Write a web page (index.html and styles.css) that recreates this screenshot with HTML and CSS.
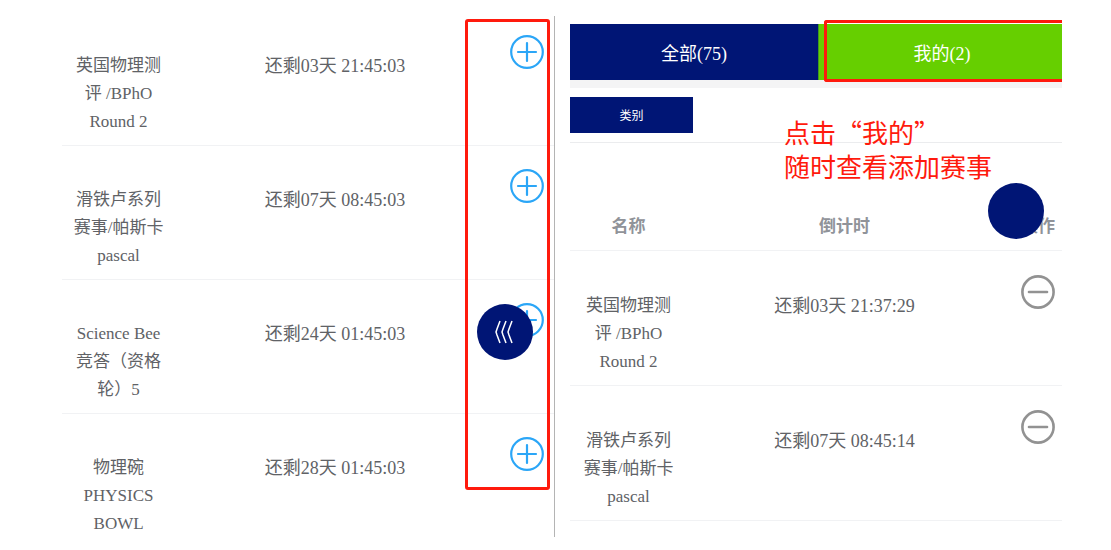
FILE: index.html
```html
<!DOCTYPE html>
<html lang="zh-CN">
    <head>
        <meta charset="UTF-8" />
        <meta name="viewport" content="width=device-width, initial-scale=1.0" />
        <title>赛事倒计时</title>
        <link rel="stylesheet" href="styles.css">
    </head>
    <body>
        <!-- shared icons -->
        <svg class="sprite" aria-hidden="true">
            <symbol id="plus" viewBox="0 0 34 34">
                <circle cx="17" cy="17" r="15.8" />
                <path d="M8 17h18M17 8v18" />
            </symbol>
            <symbol id="minus" viewBox="0 0 34 34">
                <circle cx="17" cy="17" r="15.6" />
                <path d="M8 17h18" />
            </symbol>
        </svg>

        <main class="page">
            <section class="panel panel-all">
                <table class="events">
                    <tbody>
                        <tr>
                            <td class="name">英国物理测评 /BPhO Round 2</td>
                            <td class="time">还剩03天 21:45:03</td>
                            <td class="action"><button class="icon-btn add" aria-label="添加"><svg><use href="#plus" /></svg></button></td>
                        </tr>
                        <tr>
                            <td class="name">滑铁卢系列赛事/帕斯卡 pascal</td>
                            <td class="time">还剩07天 08:45:03</td>
                            <td class="action"><button class="icon-btn add" aria-label="添加"><svg><use href="#plus" /></svg></button></td>
                        </tr>
                        <tr>
                            <td class="name">Science Bee 竞答（资格轮）5</td>
                            <td class="time">还剩24天 01:45:03</td>
                            <td class="action"><button class="icon-btn add" aria-label="添加"><svg><use href="#plus" /></svg></button></td>
                        </tr>
                        <tr>
                            <td class="name">物理碗 PHYSICS BOWL</td>
                            <td class="time">还剩28天 01:45:03</td>
                            <td class="action"><button class="icon-btn add" aria-label="添加"><svg><use href="#plus" /></svg></button></td>
                        </tr>
                    </tbody>
                </table>
                <button class="float-btn float-open" aria-label="展开">
                    <svg class="chevrons" viewBox="0 0 20 24">
                        <path d="M5 1L2 9l-1 3l1 3l3 8M11 1L8 9l-1 3l1 3l3 8M17 1L14 9l-1 3l1 3l3 8" />
                    </svg>
                </button>
                <div class="mark mark-column"></div>
            </section>

            <section class="panel panel-mine">
                <div class="tabs">
                    <button class="tab">全部(75)</button>
                    <button class="tab tab-active">我的(2)</button>
                </div>
                <div class="filters">
                    <button class="filter">类别</button>
                </div>
                <table class="events">
                    <thead>
                        <tr>
                            <th class="name">名称</th>
                            <th class="time">倒计时</th>
                            <th class="action">操作</th>
                        </tr>
                    </thead>
                    <tbody>
                        <tr>
                            <td class="name">英国物理测评 /BPhO Round 2</td>
                            <td class="time">还剩03天 21:37:29</td>
                            <td class="action"><button class="icon-btn remove" aria-label="移除"><svg><use href="#minus" /></svg></button></td>
                        </tr>
                        <tr>
                            <td class="name">滑铁卢系列赛事/帕斯卡 pascal</td>
                            <td class="time">还剩07天 08:45:14</td>
                            <td class="action"><button class="icon-btn remove" aria-label="移除"><svg><use href="#minus" /></svg></button></td>
                        </tr>
                    </tbody>
                </table>
                <button class="float-btn float-plain" aria-label="菜单"></button>
                <div class="mark mark-tab"></div>
                <p class="note">点击“我的”<br>随时查看添加赛事</p>
            </section>
        </main>
    </body>
</html>
```

FILE: styles.css
```css
* {
    box-sizing: border-box;
}

body {
    margin: 0;
    background: #fff;
    color: #606266;
    font-family: "Liberation Serif", "Noto Sans CJK SC", serif;
    font-size: 17px;
    line-height: 28px;
}

button {
    border: none;
    padding: 0;
    font-family: inherit;
    cursor: pointer;
}

.sprite {
    display: none;
}

.page {
    display: flex;
    gap: 15px;
    height: 100vh;
    padding: 16px 49px 13px 62px;
}

.panel {
    position: relative;
    flex: 1;
    overflow: hidden;
}

.panel-all {
    border-right: 1px solid #b4b4b4;
}

.panel-mine {
    padding-top: 8px;
}

/* tables */
.events {
    width: 100%;
    table-layout: fixed;
    border-spacing: 0;
}

/* list is scrolled a little under the top edge */
.panel-all .events {
    margin-top: -4px;
}

.events td,
.events th {
    padding: 41px 0 9px;
    border-bottom: 1px solid #f1f2f4;
    text-align: center;
    vertical-align: top;
}

.panel-all .events td {
    padding-top: 40px;
}

.events th {
    padding-top: 70px;
    color: #909399;
    font-weight: bold;
}

.events .name {
    width: 23%;
    padding-left: 11px;
    padding-right: 11px;
}

.panel-mine .events .name {
    padding-left: 13px;
    padding-right: 9px;
}

.events .time {
    width: 65%;
}

.panel-mine .events .time {
    padding-left: 3px;
}

.events td.time {
    font-size: 18px;
}

.events .action {
    padding-right: 7px;
    text-align: right;
    white-space: nowrap;
}

.events td.action {
    padding-top: 24px;
}

.panel-all .events td.action {
    padding-top: 23px;
    padding-right: 10px;
}

.icon-btn {
    display: inline-block;
    width: 34px;
    height: 34px;
    background: none;
    vertical-align: top;
}

.icon-btn svg {
    display: block;
    width: 34px;
    height: 34px;
    fill: none;
    stroke: currentColor;
    stroke-width: 2.2;
    stroke-linecap: round;
}

.add {
    color: #2ba6f7;
}

.remove {
    color: #929292;
}

.remove svg {
    stroke-width: 2.6;
}

/* tabs and filter */
.tabs {
    display: flex;
    margin-right: -4px;
    border-bottom: 8px solid #f4f4f5;
}

.tab {
    flex: 1;
    height: 56px;
    background: #001575;
    color: #fff;
    font-size: 18px;
}

.tab-active {
    background: #66cf00;
    box-shadow: inset 1px 0 #3f9a20;
}

.filters {
    padding: 9px 0;
    border-bottom: 1px solid #ebecee;
}

.filter {
    display: block;
    width: 25%;
    height: 36px;
    background: #001575;
    color: #fff;
    font-size: 12px;
}

/* floating buttons */
.float-btn {
    position: absolute;
    display: flex;
    align-items: center;
    justify-content: center;
    width: 56px;
    height: 56px;
    border-radius: 50%;
    background: #001575;
}

.float-open {
    top: 288px;
    right: 21px;
}

.float-plain {
    top: 167px;
    right: 18px;
}

.chevrons {
    width: 20px;
    height: 24px;
    fill: none;
    stroke: #fff;
    stroke-width: 1.5;
}

/* red highlights */
.mark {
    position: absolute;
    border: 3px solid #ff1a0d;
    border-radius: 3px;
    pointer-events: none;
}

.mark-column {
    top: 3px;
    right: 4px;
    width: 85px;
    height: 471px;
}

.mark-tab {
    top: 4px;
    left: 254px;
    right: 0;
    height: 62px;
    border-right: none;
    border-radius: 3px 0 0 3px;
}

.note {
    position: absolute;
    top: 99px;
    left: 214px;
    margin: 0;
    color: #ff1a0d;
    font-family: "Noto Sans CJK SC", sans-serif;
    font-size: 26px;
    line-height: 34px;
    white-space: nowrap;
}
```
